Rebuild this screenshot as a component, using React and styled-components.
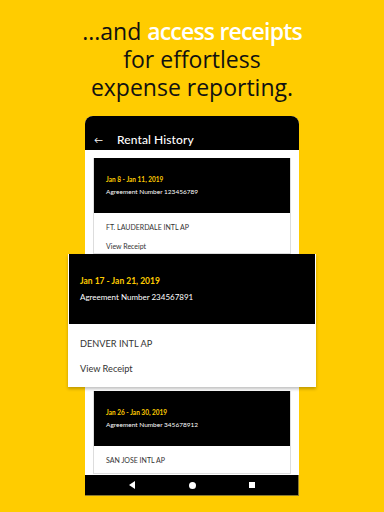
import React from "react";
import styled, { createGlobalStyle } from "styled-components";

const GlobalStyle = createGlobalStyle`
  html, body {
    margin: 0;
    padding: 0;
    background: #ffcc00;
  }
  * {
    box-sizing: border-box;
  }
`;

const Page = styled.div`
  width: 384px;
  height: 512px;
  background: #ffcc00;
  display: flex;
  flex-direction: column;
  align-items: center;
  overflow: hidden;
  font-family: "Lato", "Noto Sans", sans-serif;
`;

const Headline = styled.h1`
  margin: 17px 0 0;
  font-family: "Open Sans", "Lato", sans-serif;
  font-size: 23px;
  font-weight: 400;
  line-height: 28px;
  text-align: center;
  color: #111;
`;

const Highlight = styled.span`
  color: #fff;
  font-weight: 600;
  letter-spacing: -0.8px;
`;

const Phone = styled.div`
  margin-top: 15px;
  width: 214px;
  height: 380px;
  display: flex;
  flex-direction: column;
  background: #fff;
  border-radius: 8px 8px 0 0;
`;

const TopBar = styled.div`
  height: 34px;
  flex-shrink: 0;
  display: flex;
  align-items: center;
  padding: 12px 0 0 9px;
  gap: 14px;
  background: #000;
  border-radius: 8px 8px 0 0;
  color: #fff;
`;

const Back = styled.span`
  font-size: 9px;
  line-height: 1;
`;

const Title = styled.span`
  font-size: 12px;
  font-weight: 500;
  letter-spacing: 0.1px;
`;

const List = styled.div`
  flex: 1;
  display: flex;
  flex-direction: column;
  padding: 8px 8px 0;
`;

const Card = styled.div`
  background: #fff;
  border: 1px solid ${(p) => (p.$lifted ? "transparent" : "#ddd")};
  border-top: none;
  overflow: hidden;
  flex-shrink: 0;
  height: ${(p) => p.$height}px;
  margin: ${(p) => (p.$lifted ? "0 -25px" : "0")};
  margin-top: ${(p) => p.$gap || 0}px;
  position: relative;
  z-index: ${(p) => (p.$lifted ? 2 : 1)};
  box-shadow: ${(p) => (p.$lifted ? "0 2px 3px rgba(0,0,0,0.25)" : "none")};
`;

const CardHead = styled.div`
  background: #000;
  height: ${(p) => (p.$big ? 70 : 55)}px;
  display: flex;
  flex-direction: column;
  justify-content: center;
  padding-left: ${(p) => (p.$big ? 11 : 12)}px;
  gap: ${(p) => (p.$big ? 5 : 3)}px;
`;

const Dates = styled.div`
  color: #ffcc00;
  font-weight: 700;
  font-size: ${(p) => (p.$big ? 8.5 : 6.5)}px;
  line-height: ${(p) => (p.$big ? 11 : 9)}px;
`;

const Agreement = styled.div`
  color: #fff;
  font-size: ${(p) => (p.$big ? 8 : 6.5)}px;
  line-height: ${(p) => (p.$big ? 11 : 9)}px;
`;

const CardBody = styled.div`
  display: flex;
  flex-direction: column;
  padding: ${(p) => (p.$big ? "14px 11px" : "10px 12px")};
  gap: ${(p) => (p.$big ? 13 : 10)}px;
  color: #333;
  font-size: ${(p) => (p.$big ? 9.2 : 7)}px;
  line-height: ${(p) => (p.$big ? 12 : 9)}px;
`;

const NavBar = styled.div`
  height: 21px;
  flex-shrink: 0;
  background: #000;
  display: flex;
  align-items: center;
  justify-content: space-between;
  padding: 0 43px 0 44px;
  border-right: 1px solid #8a7a30;
  border-bottom: 1px solid #8a7a30;
`;

const NavBack = styled.div`
  width: 0;
  height: 0;
  border-top: 4px solid transparent;
  border-bottom: 4px solid transparent;
  border-right: 6px solid #fff;
`;

const NavHome = styled.div`
  width: 7px;
  height: 7px;
  border-radius: 50%;
  background: #fff;
`;

const NavRecent = styled.div`
  width: 6px;
  height: 6px;
  background: #fff;
`;

const rentals = [
  {
    dates: "Jan 8 - Jan 11, 2019",
    number: "123456789",
    place: "FT. LAUDERDALE INTL AP",
    height: 96,
    receipt: true,
  },
  {
    dates: "Jan 17 - Jan 21, 2019",
    number: "234567891",
    place: "DENVER INTL AP",
    height: 133,
    lifted: true,
    receipt: true,
  },
  {
    dates: "Jan 26 - Jan 30, 2019",
    number: "345678912",
    place: "SAN JOSE INTL AP",
    height: 83,
    gap: 4,
  },
];

const App = () => {
  return (
    <Page>
      <GlobalStyle />
      <Headline>
        ...and <Highlight>access receipts</Highlight>
        <br />
        for effortless
        <br />
        expense reporting.
      </Headline>
      <Phone>
        <TopBar>
          <Back>←</Back>
          <Title>Rental History</Title>
        </TopBar>
        <List>
          {rentals.map((r) => (
            <Card key={r.number} $height={r.height} $lifted={r.lifted} $gap={r.gap}>
              <CardHead $big={r.lifted}>
                <Dates $big={r.lifted}>{r.dates}</Dates>
                <Agreement $big={r.lifted}>Agreement Number {r.number}</Agreement>
              </CardHead>
              <CardBody $big={r.lifted}>
                <span>{r.place}</span>
                {r.receipt && <span>View Receipt</span>}
              </CardBody>
            </Card>
          ))}
        </List>
        <NavBar>
          <NavBack />
          <NavHome />
          <NavRecent />
        </NavBar>
      </Phone>
    </Page>
  );
};

export default App;
